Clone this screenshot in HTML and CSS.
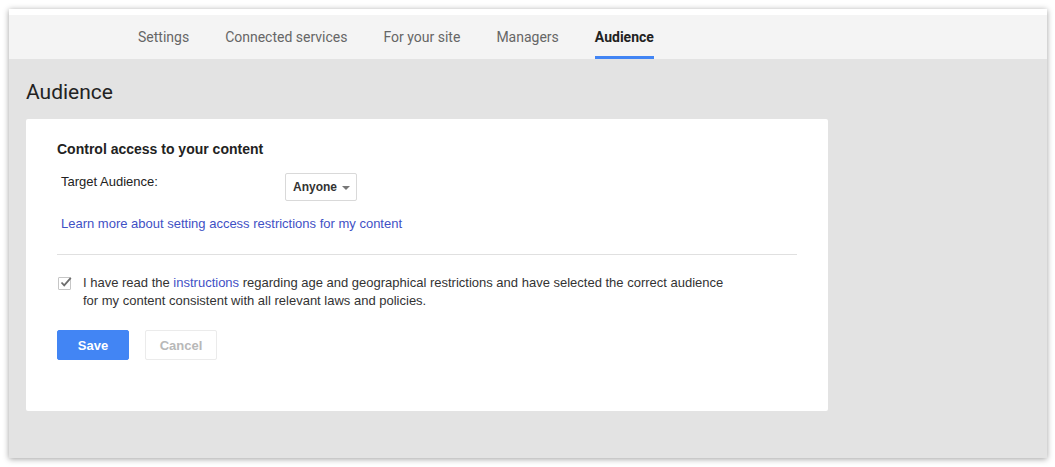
FILE: index.html
```html
<!DOCTYPE html>
<html>
<head>
<meta charset="utf-8">
<link rel="stylesheet" href="styles.css">
</head>
<body>
<div class="window">
  <div class="topstrip"></div>
  <nav class="tabs">
    <a class="tab">Settings</a>
    <a class="tab">Connected services</a>
    <a class="tab">For your site</a>
    <a class="tab">Managers</a>
    <a class="tab active">Audience</a>
  </nav>
  <main class="content">
    <h1 class="page-title">Audience</h1>
    <section class="card">
      <h2 class="card-title">Control access to your content</h2>
      <div class="field-row">
        <span class="field-label">Target Audience:</span>
        <div class="dropdown"><span>Anyone</span><span class="caret"></span></div>
      </div>
      <a class="learn-link">Learn more about setting access restrictions for my content</a>
      <hr class="divider">
      <div class="agree">
        <span class="checkbox">
          <svg width="13" height="13" viewBox="0 0 13 13"><path d="M2.5 6.5 L5.2 9.3 L11.8 1.8" fill="none" stroke="#6d6d6d" stroke-width="1.8"/></svg>
        </span>
        <p class="agree-text">I have read the <a class="inline-link">instructions</a> regarding age and geographical restrictions and have selected the correct audience for my content consistent with all relevant laws and policies.</p>
      </div>
      <div class="actions">
        <button class="btn btn-primary">Save</button>
        <button class="btn btn-disabled">Cancel</button>
      </div>
    </section>
  </main>
</div>
</body>
</html>
```
FILE: styles.css
```css
html, body {
  margin: 0;
  padding: 0;
  background: #ffffff;
}
body {
  padding: 9px 8px 9px 9px;
  font-family: Roboto, "Liberation Sans", Arial, sans-serif;
}
.window {
  width: 1038px;
  height: 449px;
  display: flex;
  flex-direction: column;
  background: #e3e3e3;
  box-shadow: 0 1px 6px rgba(0, 0, 0, 0.38);
}
.topstrip {
  height: 6px;
  background: #ffffff;
}
.tabs {
  height: 44px;
  background: #f4f4f4;
  display: flex;
  align-items: stretch;
  padding-left: 129px;
  gap: 36px;
}
.tab {
  display: flex;
  align-items: center;
  font-size: 14px;
  color: #666666;
  padding-top: 1px;
  border-bottom: 2px solid transparent;
  box-sizing: border-box;
}
.tab.active {
  color: #222222;
  font-weight: 700;
  border-bottom-color: #4285f4;
  border-bottom-width: 3px;
  padding-top: 2px;
}
.content {
  flex: 1;
  padding: 0 0 0 17px;
}
.page-title {
  margin: 21px 0 0 0;
  font-size: 21px;
  font-weight: 400;
  color: #222222;
  line-height: 24px;
  height: 39px;
}
.card {
  width: 802px;
  height: 292px;
  box-sizing: border-box;
  background: #ffffff;
  border-radius: 2px;
  padding: 21px 31px 0 31px;
  font-family: "Liberation Sans", Arial, sans-serif;
  font-size: 13px;
  color: #333333;
}
.card-title {
  margin: 0;
  font-family: "Liberation Sans", Arial, sans-serif;
  font-size: 14px;
  font-weight: 700;
  color: #222222;
  line-height: 18px;
}
.field-row {
  display: flex;
  align-items: flex-start;
  margin-top: 16px;
  padding-left: 4px;
}
.field-label {
  width: 224px;
  line-height: 16px;
  color: #222222;
}
.dropdown {
  height: 28px;
  box-sizing: border-box;
  border: 1px solid #d9d9d9;
  border-radius: 2px;
  padding: 0 6px 0 7px;
  display: flex;
  align-items: center;
  gap: 5px;
  font-size: 12px;
  font-weight: 700;
  color: #333333;
  margin-top: -1px;
}
.caret {
  width: 0;
  height: 0;
  border-left: 4px solid transparent;
  border-right: 4px solid transparent;
  border-top: 4px solid #777777;
  margin-top: 1px;
}
.learn-link {
  display: block;
  margin-top: 15px;
  padding-left: 4px;
  color: #3f51c5;
  line-height: 16px;
}
.divider {
  margin: 22px 0 0 0;
  border: 0;
  border-top: 1px solid #e0e0e0;
  width: 740px;
}
.agree {
  display: flex;
  align-items: flex-start;
  margin-top: 19px;
  padding-left: 1px;
}
.checkbox {
  width: 13px;
  height: 13px;
  box-sizing: border-box;
  border: 1px solid #c6c6c6;
  border-radius: 1px;
  margin-top: 3px;
  position: relative;
  flex: none;
}
.checkbox svg {
  position: absolute;
  left: 0;
  top: -2px;
}
.agree-text {
  margin: 0 0 0 12px;
  width: 650px;
  line-height: 18px;
  color: #333333;
}
.inline-link {
  color: #3f51c5;
}
.actions {
  display: flex;
  gap: 16px;
  margin-top: 20px;
}
.btn {
  width: 72px;
  height: 30px;
  border-radius: 2px;
  font-family: "Liberation Sans", Arial, sans-serif;
  font-size: 13px;
  font-weight: 700;
  padding: 0;
}
.btn-primary {
  background: #4285f4;
  color: #ffffff;
  border: 1px solid #4285f4;
}
.btn-disabled {
  background: #ffffff;
  color: #b8b8b8;
  border: 1px solid #ebebeb;
}
```
